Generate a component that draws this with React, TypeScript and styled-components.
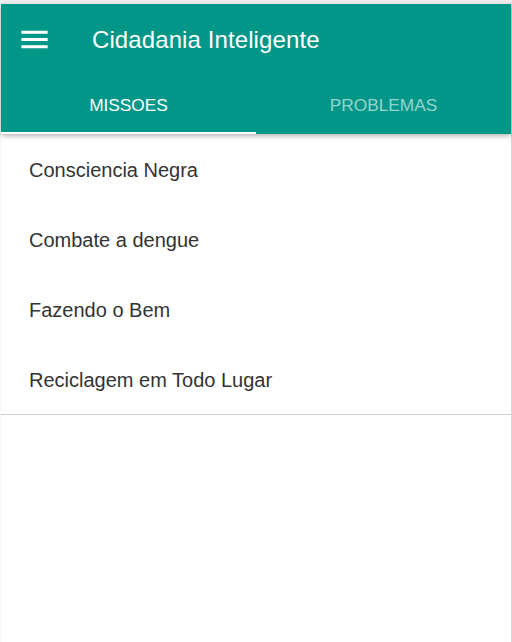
import styled, { createGlobalStyle } from "styled-components";

const GlobalStyle = createGlobalStyle`
  html, body {
    margin: 0;
    padding: 0;
    background: #ffffff;
    font-family: "Liberation Sans", Arial, sans-serif;
  }
`;

const missions = ["Consciencia Negra", "Combate a dengue", "Fazendo o Bem", "Reciclagem em Todo Lugar"];

function MenuIcon() {
  return (
    <svg width="35" height="35" viewBox="0 0 24 24" fill="#ffffff">
      <path d="M3 18h18v-2H3v2zm0-5h18v-2H3v2zm0-7v2h18V6H3z" />
    </svg>
  );
}

function App() {
  return (
    <>
      <GlobalStyle />
      <Frame>
        <Header>
          <Toolbar>
            <MenuButton>
              <MenuIcon />
            </MenuButton>
            <Title>Cidadania Inteligente</Title>
          </Toolbar>
          <Tabs>
            <Tab active>MISSOES</Tab>
            <Tab>PROBLEMAS</Tab>
          </Tabs>
        </Header>
        <List>
          {missions.map((m) => (
            <Item key={m}>{m}</Item>
          ))}
        </List>
      </Frame>
    </>
  );
}

export default App;

const Frame = styled.div`
  height: 642px;
  box-sizing: border-box;
  border-top: 4px solid #eeeeee;
  border-left: 1px solid #f6f6f6;
  border-right: 1px solid #d6d6d6;
  width: 512px;
`;

const Header = styled.header`
  background-color: #009688;
  box-shadow: 0 2px 5px rgba(0, 0, 0, 0.3);
  position: relative;
  z-index: 1;
`;

const Toolbar = styled.div`
  height: 72px;
  display: flex;
  align-items: center;
  padding-left: 16px;
`;

const MenuButton = styled.div`
  display: flex;
  align-items: center;
  width: 75px;
  margin-top: -2px;
`;

const Title = styled.h1`
  margin: 0;
  color: #ffffff;
  font-size: 24px;
  font-weight: 400;
  letter-spacing: 0.1px;
`;

const Tabs = styled.div`
  display: grid;
  grid-template-columns: 1fr 1fr;
  height: 58px;
`;

const Tab = styled.div<{ active?: boolean }>`
  display: flex;
  align-items: center;
  justify-content: center;
  font-size: 17.3px;
  color: ${({ active }) => (active ? "#ffffff" : "rgba(255, 255, 255, 0.6)")};
  border-bottom: 2px solid ${({ active }) => (active ? "#ffffff" : "transparent")};
  box-sizing: border-box;
  padding-top: 2px;
`;

const List = styled.ul`
  list-style: none;
  margin: 0;
  padding: 0;
  border-bottom: 1px solid #d0d0d0;
`;

const Item = styled.li`
  height: 70px;
  display: flex;
  align-items: center;
  padding-left: 28px;
  padding-top: 3px;
  box-sizing: border-box;
  font-size: 20px;
  color: #333333;
`;
